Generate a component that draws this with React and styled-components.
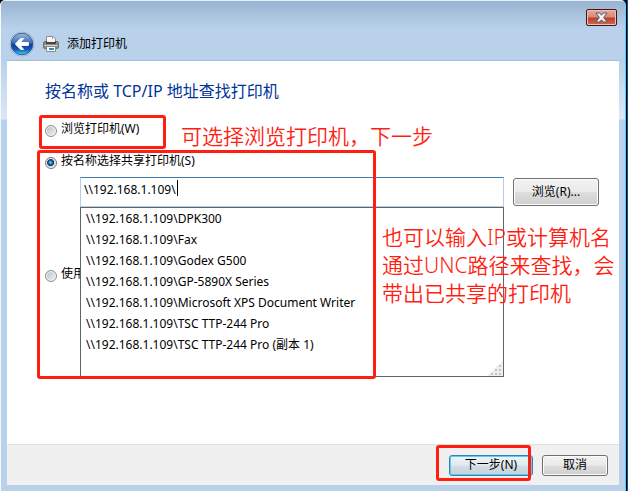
import { useState } from 'react';
import styled, { createGlobalStyle, css } from 'styled-components';

const printers = [
  'DPK300',
  'Fax',
  'Godex G500',
  'GP-5890X Series',
  'Microsoft XPS Document Writer',
  'TSC TTP-244 Pro',
  'TSC TTP-244 Pro (副本 1)',
];

const host = '\\\\192.168.1.109\\';

function App() {
  const [mode, setMode] = useState('name');
  const [path, setPath] = useState(host);

  return (
    <Desktop>
      <GlobalStyle />
      <Dialog>
        <CloseButton type="button" aria-label="关闭">
          <CloseIcon />
        </CloseButton>
        <TitleBar>
          <BackButton type="button" aria-label="返回">
            <BackIcon />
          </BackButton>
          <PrinterIcon />
          <Title>添加打印机</Title>
        </TitleBar>

        <Body>
          <Heading>按名称或 TCP/IP 地址查找打印机</Heading>

          <Option>
            <Radio name="mode" checked={mode === 'browse'} onChange={() => setMode('browse')} />
            浏览打印机(W)
          </Option>
          <Option>
            <Radio name="mode" checked={mode === 'name'} onChange={() => setMode('name')} />
            按名称选择共享打印机(S)
          </Option>

          <PathRow>
            <Combo>
              <PathInput
                aria-label="打印机名称"
                value={path}
                onChange={(e) => setPath(e.target.value)}
              />
              <Caret />
              <Suggestions>
                {printers.map((name) => (
                  <Suggestion key={name} onClick={() => setPath(host + name)}>
                    {host + name}
                  </Suggestion>
                ))}
                <Grip />
              </Suggestions>
            </Combo>
            <BrowseButton type="button">浏览(R)...</BrowseButton>
          </PathRow>

          <Option>
            <Radio name="mode" checked={mode === 'tcp'} onChange={() => setMode('tcp')} />
            使用
          </Option>

          <Mark $top={54} $left={32} $width={127} $height={34} />
          <Mark $top={89} $left={30} $width={339} $height={229} />
          <Note $top={61} $left={174}>可选择浏览打印机，下一步</Note>
          <Note $top={162} $left={375}>
            也可以输入IP或计算机名
            <br />
            通过UNC路径来查找，会
            <br />
            带出已共享的打印机
          </Note>
        </Body>

        <Footer>
          <NextButton type="button">下一步(N)</NextButton>
          <Button type="button">取消</Button>
          <FooterMark />
        </Footer>
      </Dialog>
    </Desktop>
  );
}

const BackIcon = () => (
  <svg width="26" height="26" viewBox="0 0 26 26">
    <defs>
      <linearGradient id="ball" x1="0" y1="0" x2="0" y2="1">
        <stop offset="0" stopColor="#9db9dd" />
        <stop offset="0.46" stopColor="#3d6db4" />
        <stop offset="0.5" stopColor="#0d3c92" />
        <stop offset="0.75" stopColor="#1259b8" />
        <stop offset="1" stopColor="#4fd0fb" />
      </linearGradient>
    </defs>
    <circle cx="13" cy="13" r="12.3" fill="#8fa6c3" />
    <circle cx="13" cy="13" r="11.5" fill="#dce9f6" />
    <circle cx="13" cy="13" r="10.8" fill="url(#ball)" stroke="#1d4588" strokeWidth="0.8" />
    <path
      d="M11.6 7.6 L6.4 13 L11.6 18.4 H14.6 L11.2 14.4 H19.4 V11.6 H11.2 L14.6 7.6 Z"
      fill="#fff"
      stroke="#fff"
      strokeLinejoin="round"
    />
  </svg>
);

const PrinterIcon = () => (
  <svg width="16" height="16" viewBox="0 0 16 16">
    <path d="M3.5 0.5 H10 L12.5 3 V6 H3.5 Z" fill="#fff" stroke="#8a8a8a" />
    <path d="M9.5 0.5 V3.5 H12.5" fill="none" stroke="#a5a5a5" />
    <rect x="0.5" y="5.5" width="15" height="7" rx="1.5" fill="#8c8c8c" stroke="#707070" />
    <rect x="3" y="5" width="10" height="3" fill="#454545" />
    <rect x="4" y="3" width="8" height="3" fill="#f6f6f6" />
    <path d="M1.5 9.5 H14.5" stroke="#d0d0d0" />
    <path d="M3.5 10.5 H12.5 V15.5 H3.5 Z" fill="#fff" stroke="#8a8a8a" />
    <rect x="6" y="12" width="3" height="2" fill="#2f86c9" />
    <rect x="9" y="12" width="2" height="2" fill="#3f9a72" />
  </svg>
);

const CloseIcon = () => (
  <svg width="13" height="11" viewBox="0 0 13 11">
    <path
      d="M1 1 H4.6 L6.5 3.2 L8.4 1 H12 L8.6 5.5 L12 10 H8.4 L6.5 7.8 L4.6 10 H1 L4.4 5.5 Z"
      fill="#f4f4f6"
      stroke="#565a70"
    />
  </svg>
);

const Grip = () => (
  <GripSvg width="16" height="16" viewBox="0 0 16 16">
    <path d="M16 0 V16 H0 Z" fill="#efefef" />
    <g fill="#c4c4c4">
      <rect x="12" y="5" width="2" height="2" />
      <rect x="8" y="9" width="2" height="2" />
      <rect x="12" y="9" width="2" height="2" />
      <rect x="4" y="13" width="2" height="2" />
      <rect x="8" y="13" width="2" height="2" />
      <rect x="12" y="13" width="2" height="2" />
    </g>
  </GripSvg>
);

// styled components
const GlobalStyle = createGlobalStyle`
  * { box-sizing: border-box; }
  body {
    margin: 0;
    color: #000;
    font: 12px/20px "Noto Sans", "Noto Sans CJK SC", sans-serif;
  }
  button, input { font: inherit; color: inherit; }
`;

const Desktop = styled.div`
  display: flex;
  min-height: 100vh;
  padding-right: 2px;
  background: linear-gradient(90deg, transparent calc(100% - 1px), #0a4f9e 0), #000;
`;

const Dialog = styled.div`
  position: relative;
  flex: 1;
  display: flex;
  flex-direction: column;
  padding: 0 6px 6px;
  border: solid;
  border-width: 1px 1px 0;
  border-color: #e8f1f8 #5fd0e8 #fff #f4f9fd;
  border-radius: 5px 5px 0 0;
  background: linear-gradient(#99b4d1, #b9d1ea 28px, #b9d1ea 60px, #dbe8f6 118px, #b9d1ea 119px);
`;

const TitleBar = styled.header`
  display: flex;
  align-items: center;
  gap: 8px;
  height: 60px;
  padding: 26px 2px 0;
  border-bottom: 1px solid #a0bcd8;
`;

const Title = styled.h1`
  margin: 0;
  font-size: 12px;
  font-weight: 400;
`;

const BackButton = styled.button`
  display: flex;
  padding: 0;
  border: 0;
  background: none;
`;

const CloseButton = styled.button`
  position: absolute;
  top: 8px;
  right: 8px;
  display: flex;
  align-items: center;
  justify-content: center;
  width: 31px;
  height: 17px;
  padding: 0;
  border: 1px solid #43141c;
  border-radius: 2px;
  box-shadow: inset 0 0 0 1px #efc0b8;
  background: linear-gradient(#eba79b, #d98877 48%, #b8402a 52%, #cf6a52);
`;

const Body = styled.main`
  position: relative;
  flex: 1;
  padding: 18px 20px 0 38px;
  background: #fff;
`;

const Heading = styled.h2`
  margin: 0 0 16px;
  color: #003399;
  font-size: 16px;
  font-weight: 400;
  line-height: 24px;
`;

const Option = styled.label`
  display: flex;
  align-items: center;
  gap: 4px;
  width: fit-content;
  margin-bottom: 12px;
`;

const Radio = styled.input.attrs({ type: 'radio' })`
  appearance: none;
  width: 12px;
  height: 12px;
  margin: 4px 0 0;
  border: 1px solid #8e8f8f;
  border-radius: 50%;
  box-shadow: inset 0 0 0 1px #f4f4f4;
  background: linear-gradient(135deg, #b9bec4, #f4f4f4);

  &:checked {
    border-color: #6c7a89;
    background: radial-gradient(circle at 45% 45%, #7fd3f2, #1b6d9e 25%, #0d2f52 42%, #d4dce4 50%);
  }
`;

const PathRow = styled.div`
  display: flex;
  align-items: center;
  gap: 9px;
  margin: -6px 0 57px 35px;
`;

const Combo = styled.div`
  position: relative;
  flex: 1;
`;

const PathInput = styled.input`
  display: block;
  width: 100%;
  height: 30px;
  padding: 0 3px 6px;
  border: 1px solid #b5cfe7;
  border-top-color: #3d7bad;
  outline: 0;
  background: #fff;
`;

const Caret = styled.span`
  position: absolute;
  top: 3px;
  left: 97px;
  width: 1px;
  height: 16px;
  background: #000;
`;

const Suggestions = styled.ul`
  position: absolute;
  z-index: 1;
  top: 100%;
  left: 0;
  right: 0;
  height: 170px;
  margin: 0;
  padding: 0 0 0 5px;
  border: 1px solid #646464;
  background: #fff;
  list-style: none;
`;

const Suggestion = styled.li`
  line-height: 21px;
`;

const GripSvg = styled.svg`
  position: absolute;
  right: 0;
  bottom: 0;
`;

const Button = styled.button`
  min-width: 66px;
  height: 21px;
  padding: 0 10px;
  border: 1px solid #707070;
  border-radius: 3px;
  box-shadow: inset 0 0 0 1px #fcfcfc;
  background: linear-gradient(#f2f2f2, #ebebeb 48%, #dddddd 52%, #cfcfcf);
  line-height: 16px;
`;

const BrowseButton = styled(Button)`
  min-width: 86px;
  height: 28px;
`;

const NextButton = styled(Button)`
  min-width: 84px;
  border-color: #3c7fb1;
  box-shadow: inset 0 0 0 1px #4fd0f5;
  background: linear-gradient(#eef3f6, #e2eaef 48%, #d3dee5 52%, #c3d2dc);
`;

const Footer = styled.footer`
  position: relative;
  display: flex;
  align-items: center;
  justify-content: flex-end;
  gap: 9px;
  height: 41px;
  padding: 0 11px;
  border-top: 1px solid #dfdfdf;
  background: #f0f0f0;
`;

const markFrame = css`
  position: absolute;
  z-index: 2;
  border: 3px solid #ff1e10;
  border-radius: 3px;
  pointer-events: none;
`;

const Mark = styled.div`
  ${markFrame}
  top: ${(p) => p.$top}px;
  left: ${(p) => p.$left}px;
  width: ${(p) => p.$width}px;
  height: ${(p) => p.$height}px;
`;

const FooterMark = styled.div`
  ${markFrame}
  top: 0;
  right: 88px;
  width: 95px;
  height: 36px;
`;

const Note = styled.p`
  position: absolute;
  z-index: 2;
  top: ${(p) => p.$top}px;
  left: ${(p) => p.$left}px;
  margin: 0;
  color: #ff1e10;
  font-size: 21px;
  font-weight: 350;
  line-height: 28px;
  white-space: nowrap;
`;

export default App;
